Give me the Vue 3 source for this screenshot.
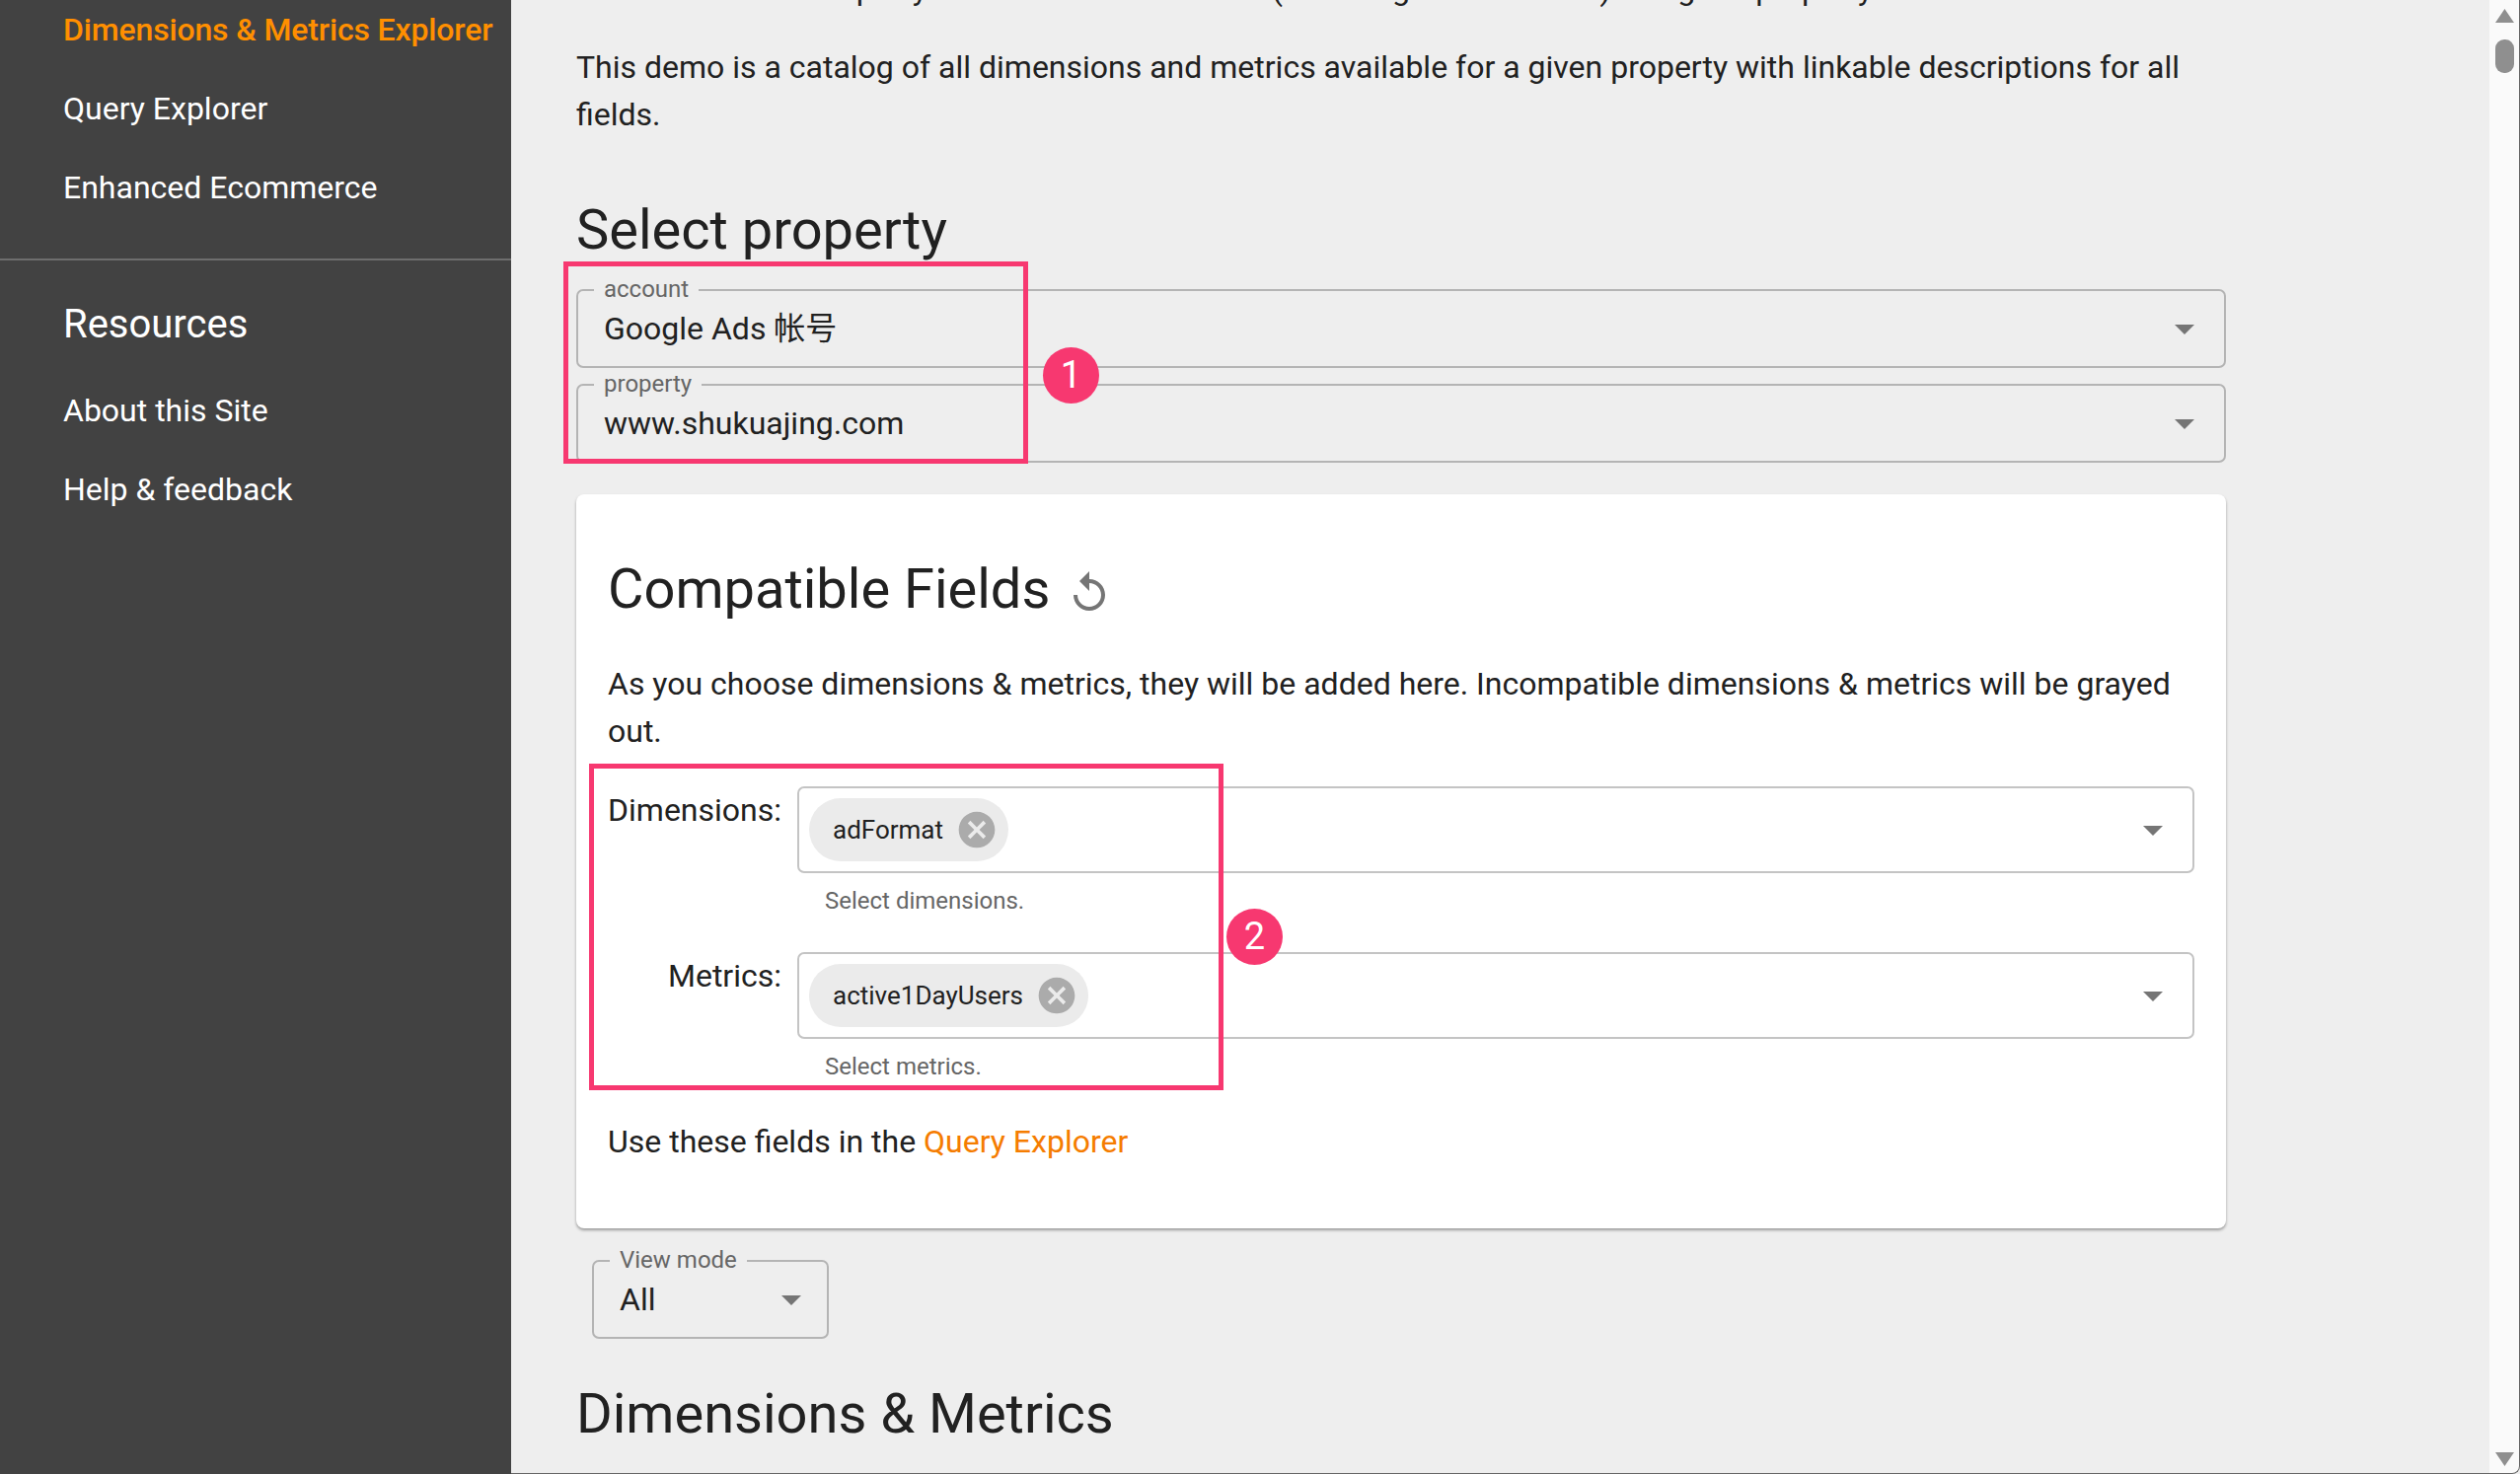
<script setup>
const mainNav = ['Query Explorer', 'Enhanced Ecommerce']
const resourceNav = ['About this Site', 'Help & feedback']

const arrow = 'M7 10l5 5 5-5z'
const replay = 'M12 5V1L7 6l5 5V7c3.31 0 6 2.69 6 6s-2.69 6-6 6-6-2.69-6-6H4c0 4.42 3.58 8 8 8s8-3.58 8-8-3.58-8-8-8z'
const cancel = 'M12 2C6.47 2 2 6.47 2 12s4.47 10 10 10 10-4.47 10-10S17.53 2 12 2zm5 13.59L15.59 17 12 13.41 8.41 17 7 15.59 10.59 12 7 8.41 8.41 7 12 10.59 15.59 7 17 8.41 13.41 12 17 15.59z'

const fields = [
  { label: 'Dimensions:', chip: 'adFormat', help: 'Select dimensions.' },
  { label: 'Metrics:', chip: 'active1DayUsers', help: 'Select metrics.' },
]
</script>

<template>
  <div class="page">
    <aside class="sidebar">
      <nav class="nav-main">
        <a class="nav-item active">Dimensions &amp; Metrics Explorer</a>
        <a v-for="item in mainNav" :key="item" class="nav-item">{{ item }}</a>
      </nav>
      <hr class="divider" />
      <h2 class="nav-title">Resources</h2>
      <a v-for="item in resourceNav" :key="item" class="nav-item">{{ item }}</a>
    </aside>

    <main class="main">
      <div class="content">
        <p class="cut-line">View and edit a Property and its metrics or fields (including custom ones) using the property.</p>
        <p class="intro">
          This demo is a catalog of all dimensions and metrics available for a given property with linkable descriptions for all fields.
        </p>

        <h1 class="heading">Select property</h1>

        <div class="selects">
          <div class="outlined">
            <span class="float-label">account</span>
            <span class="value">Google Ads 帐号</span>
            <svg class="arrow" viewBox="0 0 24 24"><path :d="arrow" /></svg>
          </div>
          <div class="outlined">
            <span class="float-label">property</span>
            <span class="value">www.shukuajing.com</span>
            <svg class="arrow" viewBox="0 0 24 24"><path :d="arrow" /></svg>
          </div>
          <div class="mark mark-one"></div>
          <div class="badge badge-one">1</div>
        </div>

        <section class="card">
          <div class="card-title">
            <h2 class="heading">Compatible Fields</h2>
            <svg class="replay" viewBox="0 0 24 24"><path :d="replay" /></svg>
          </div>
          <p class="card-text">
            As you choose dimensions &amp; metrics, they will be added here. Incompatible dimensions &amp; metrics will be grayed out.
          </p>

          <div class="field-list">
            <div v-for="field in fields" :key="field.label" class="field-row">
              <label class="field-label">{{ field.label }}</label>
              <div class="field-body">
                <div class="chip-box">
                  <span class="chip">
                    {{ field.chip }}
                    <svg class="chip-x" viewBox="0 0 24 24"><path :d="cancel" /></svg>
                  </span>
                  <svg class="arrow" viewBox="0 0 24 24"><path :d="arrow" /></svg>
                </div>
                <div class="help">{{ field.help }}</div>
              </div>
            </div>
            <div class="mark mark-two"></div>
            <div class="badge badge-two">2</div>
          </div>

          <p class="use-line">Use these fields in the <a class="link">Query Explorer</a></p>
        </section>

        <div class="outlined view-mode">
          <span class="float-label">View mode</span>
          <span class="value">All</span>
          <svg class="arrow" viewBox="0 0 24 24"><path :d="arrow" /></svg>
        </div>

        <h1 class="heading bottom-heading">Dimensions &amp; Metrics</h1>
      </div>
    </main>

    <div class="scrollbar">
      <span class="tri tri-up"></span>
      <span class="thumb"></span>
      <span class="spacer"></span>
      <span class="tri tri-down"></span>
    </div>
  </div>
</template>

<style>
html, body {
  margin: 0;
  height: 100%;
  overflow: hidden;
}
</style>

<style scoped>
.page {
  display: flex;
  width: 2554px;
  height: 1494px;
  overflow: hidden;
  font-family: Roboto, "Noto Sans CJK SC", sans-serif;
  font-size: 32px;
  color: #212121;
  background: #eeeeee;
}

/* sidebar */
.sidebar {
  width: 518px;
  flex-shrink: 0;
  background: #424242;
  color: #fff;
  display: flex;
  flex-direction: column;
  margin-top: -10px;
}

.nav-item {
  display: block;
  height: 80px;
  line-height: 80px;
  padding-left: 64px;
  white-space: nowrap;
}

.active {
  color: #ff8f00;
  font-weight: 500;
  letter-spacing: -0.15px;
}

.divider {
  border: none;
  height: 2px;
  margin: 32px 0 0;
  background: #6e6e6e;
}

.nav-title {
  margin: 0;
  padding: 31px 0 0 64px;
  height: 81px;
  font-size: 40px;
  line-height: 68px;
  font-weight: 400;
}

/* main column */
.main {
  flex: 1;
  min-width: 0;
  border-bottom: 1px solid #666;
  overflow: hidden;
}

.content {
  width: 1672px;
  margin: -35px 0 0 66px;
}

.cut-line {
  margin: 0;
  padding-left: 10px;
  line-height: 48px;
  white-space: nowrap;
}

.intro {
  margin: 32px 0 0;
  line-height: 47.5px;
}

.heading {
  margin: 0;
  font-size: 56px;
  font-weight: 400;
  line-height: 70px;
  white-space: nowrap;
}

.intro + .heading {
  margin-top: 58px;
}

.selects {
  position: relative;
  margin-top: 25px;
  display: flex;
  flex-direction: column;
  gap: 16px;
}

.outlined {
  position: relative;
  box-sizing: border-box;
  height: 80px;
  border: 2px solid #b4b4b4;
  border-radius: 7px;
  padding-left: 26px;
  display: flex;
  align-items: center;
}

.float-label {
  position: absolute;
  left: 16px;
  top: -16px;
  padding: 0 10px;
  background: #eeeeee;
  font-size: 24px;
  line-height: 28px;
  color: #666;
}

.value {
  line-height: 40px;
  margin-top: -1px;
}

.arrow {
  position: absolute;
  right: 16px;
  top: 50%;
  width: 48px;
  height: 48px;
  margin-top: -24px;
  fill: #757575;
}

/* the red boxes and numbers laid over the screenshot */
.mark {
  position: absolute;
  box-sizing: border-box;
  border: 5px solid #f73870;
  pointer-events: none;
}

.mark-one {
  left: -13px;
  top: -28px;
  width: 471px;
  height: 205px;
}

.mark-two {
  left: -19px;
  top: -23px;
  width: 643px;
  height: 331px;
}

.badge {
  position: absolute;
  width: 57px;
  height: 57px;
  border-radius: 50%;
  background: #f73870;
  color: #fff;
  font-size: 38px;
  line-height: 57px;
  text-align: center;
}

.badge-one {
  left: 473px;
  top: 59px;
}

.badge-two {
  left: 627px;
  top: 124px;
}

/* card */
.card {
  margin-top: 32px;
  box-sizing: border-box;
  height: 744px;
  padding: 61px 32px 0;
  background: #fff;
  border-radius: 8px;
  box-shadow: 0 2px 3px rgba(0, 0, 0, 0.35);
}

.card-title {
  display: flex;
  align-items: center;
  gap: 17px;
}

.replay {
  width: 48px;
  height: 48px;
  fill: #757575;
  margin-top: 8px;
  margin-left: -1px;
}

.card-text {
  margin: 37px 0 0;
  line-height: 48px;
}

.field-list {
  position: relative;
  margin-top: 32px;
  display: flex;
  flex-direction: column;
  gap: 36px;
}

.field-row {
  display: flex;
}

.field-label {
  width: 176px;
  flex-shrink: 0;
  text-align: right;
  line-height: 48px;
}

.field-body {
  flex: 1;
  margin-left: 16px;
}

.chip-box {
  position: relative;
  box-sizing: border-box;
  height: 88px;
  border: 2px solid #c4c4c4;
  border-radius: 7px;
  display: flex;
  align-items: center;
  padding-left: 10px;
}

.chip {
  display: inline-flex;
  align-items: center;
  height: 64px;
  padding: 0 10px 0 24px;
  border-radius: 32px;
  background: #ebebeb;
  font-size: 26px;
  gap: 12px;
}

.chip-x {
  width: 44px;
  height: 44px;
  fill: #ababab;
}

.help {
  padding-left: 28px;
  margin-top: 12px;
  font-size: 24px;
  line-height: 32px;
  height: 32px;
  color: #666;
}

.use-line {
  margin: 36px 0 0;
  line-height: 48px;
}

.link {
  color: #f57c00;
}

.view-mode {
  width: 240px;
  margin: 32px 0 0 16px;
}

.view-mode .arrow {
  right: 12px;
}

.bottom-heading {
  margin-top: 41px;
}

/* fake window scrollbar */
.scrollbar {
  width: 31px;
  flex-shrink: 0;
  box-sizing: border-box;
  background: #fafafa;
  border-right: 1px solid #666;
  border-bottom: 1px solid #666;
  border-bottom-right-radius: 8px;
  padding: 9px 5px 7px 6px;
  display: flex;
  flex-direction: column;
  align-items: center;
}

.tri {
  width: 19px;
  height: 14px;
  background: #8f8f8f;
}

.tri-up {
  clip-path: polygon(50% 0, 100% 100%, 0 100%);
}

.tri-down {
  clip-path: polygon(0 0, 100% 0, 50% 100%);
}

.thumb {
  width: 19px;
  height: 34px;
  margin-top: 17px;
  border-radius: 9px;
  background: #8f8f8f;
}

.spacer {
  flex: 1;
}
</style>
